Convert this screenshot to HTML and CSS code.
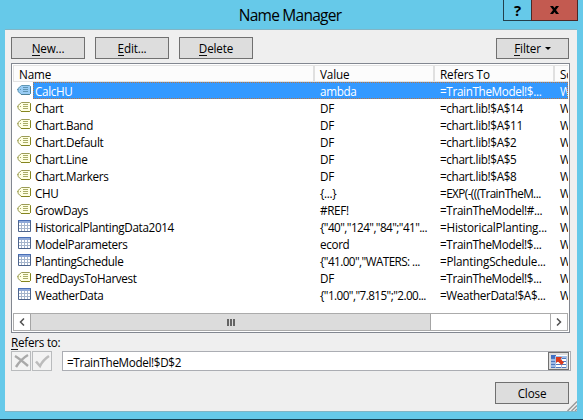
FILE: index.html
```html
<!DOCTYPE html>
<html lang="en">
<head>
<meta charset="utf-8">
<title>Name Manager</title>
<link rel="stylesheet" href="styles.css">
</head>
<body>
<svg class="defs" width="0" height="0">
  <symbol id="tag" viewBox="0 0 14 10">
    <path class="tag-body" d="M4.500.5h8l1 1v7l-1 1h-8L1 6.500V3.500z"/>
    <path class="tag-lines" d="M6 2.500h5M6 4.500h5M6 6.500h5M0 4.500h1.500M3 4.500h1"/>
    <path class="tag-edge" d="M4 9.500h8.500l1-1v-7"/>
  </symbol>
  <symbol id="table" viewBox="0 0 13 12">
    <path fill="#fff" d="M0 0h13v12H0z"/>
    <path fill="#8fa9d8" d="M0 0h13v3H0z"/>
    <path fill="none" stroke="#a5b5cc" d="M3.500 3v8M6.500 3v8M9.500 3v8M1 5.500h11M1 8.500h11"/>
    <path fill="none" stroke="#4d648c" d="M.5.5h12v11H.5z"/>
    <path fill="none" stroke="#4a70b8" d="M0 .5h13"/>
  </symbol>
</svg>
<div class="window">
  <header class="titlebar">
    <h1>Name Manager</h1>
    <div class="caption">
      <button class="help">?</button>
      <button class="exit"><svg width="9" height="8" viewBox="0 0 9 8"><path d="M0 0h3l1.500 2L6 0h3L6 4l3 4H6L4.500 6 3 8H0l3-4z"/></svg></button>
    </div>
  </header>
  <main class="client">
    <div class="toolbar">
      <button class="btn"><span><u>N</u>ew...</span></button>
      <button class="btn"><span><u>E</u>dit...</span></button>
      <button class="btn"><span><u>D</u>elete</span></button>
      <button class="btn filter"><span><u>F</u>ilter</span><i class="caret"></i></button>
    </div>
    <section class="list">
      <div class="head"><span>Name</span><span>Value</span><span>Refers To</span><span>Sc</span></div>
      <div class="rows">
        <div class="row selected"><svg class="tag"><use href="#tag"/></svg><div class="cells"><span>CalcHU</span><span>ambda</span><span>=TrainTheModel!$...</span><span>W</span></div></div>
        <div class="row"><svg class="tag"><use href="#tag"/></svg><div class="cells"><span>Chart</span><span>DF</span><span>=chart.lib!$A$14</span><span>W</span></div></div>
        <div class="row"><svg class="tag"><use href="#tag"/></svg><div class="cells"><span>Chart.Band</span><span>DF</span><span>=chart.lib!$A$11</span><span>W</span></div></div>
        <div class="row"><svg class="tag"><use href="#tag"/></svg><div class="cells"><span>Chart.Default</span><span>DF</span><span>=chart.lib!$A$2</span><span>W</span></div></div>
        <div class="row"><svg class="tag"><use href="#tag"/></svg><div class="cells"><span>Chart.Line</span><span>DF</span><span>=chart.lib!$A$5</span><span>W</span></div></div>
        <div class="row"><svg class="tag"><use href="#tag"/></svg><div class="cells"><span>Chart.Markers</span><span>DF</span><span>=chart.lib!$A$8</span><span>W</span></div></div>
        <div class="row"><svg class="tag"><use href="#tag"/></svg><div class="cells"><span>CHU</span><span>{...}</span><span class="dense">=EXP(-(((TrainTheM...</span><span>W</span></div></div>
        <div class="row"><svg class="tag"><use href="#tag"/></svg><div class="cells"><span>GrowDays</span><span>#REF!</span><span>=TrainTheModel!#...</span><span>W</span></div></div>
        <div class="row"><svg class="table"><use href="#table"/></svg><div class="cells"><span>HistoricalPlantingData2014</span><span class="dense">{"40","124","84";"41"...</span><span class="loose">=HistoricalPlanting...</span><span>W</span></div></div>
        <div class="row"><svg class="table"><use href="#table"/></svg><div class="cells"><span>ModelParameters</span><span>ecord</span><span>=TrainTheModel!$...</span><span>W</span></div></div>
        <div class="row"><svg class="table"><use href="#table"/></svg><div class="cells"><span>PlantingSchedule</span><span class="dense">{"41.00","WATERS: ...</span><span class="loose">=PlantingSchedule...</span><span>W</span></div></div>
        <div class="row"><svg class="tag"><use href="#tag"/></svg><div class="cells"><span>PredDaysToHarvest</span><span>DF</span><span>=TrainTheModel!$...</span><span>W</span></div></div>
        <div class="row"><svg class="table"><use href="#table"/></svg><div class="cells"><span>WeatherData</span><span class="dense">{"1.00","7.815";"2.00...</span><span>=WeatherData!$A$...</span><span>W</span></div></div>
      </div>
      <div class="scroll">
        <div class="arrow"><svg width="6" height="8" viewBox="0 0 6 8"><path d="M5 .5 1.500 4 5 7.500"/></svg></div>
        <div class="thumb"><i></i><i></i><i></i></div>
        <div class="arrow end"><svg width="6" height="8" viewBox="0 0 6 8"><path d="M1 .5 4.500 4 1 7.500"/></svg></div>
      </div>
    </section>
    <label class="label"><u>R</u>efers to:</label>
    <div class="formula">
      <button class="tool"><svg width="17" height="17" viewBox="0 0 17 17"><path fill="none" stroke="#a9a9a9" stroke-width="2.400" d="M2 3q5 3 13 10M15 2Q8 6 3 14"/></svg></button>
      <button class="tool"><svg width="17" height="17" viewBox="0 0 17 17"><path fill="none" stroke="#bcbcbc" stroke-width="2.600" d="M2 8.500 6 13Q9 7 15 3"/></svg></button>
      <div class="field"><span>=TrainTheModel!$D$2</span>
        <button class="pick"><svg width="16" height="13" viewBox="0 0 16 13">
          <path fill="#fff" d="M0 0h16v13H0z"/>
          <path fill="#3f6fc4" d="M0 0h5v3H0z"/>
          <path fill="#9fbce8" d="M5 1h11v2H5zM0 3h5v9H0z"/>
          <path fill="none" stroke="#4f78bd" d="M0 3.500h16M0 6.500h16M0 9.500h16M0 12.500h16"/>
          <path fill="none" stroke="#a9c0e4" d="M4.500 1v12M10.500 1v12M15.500 1v12"/>
          <path fill="#dc3a1c" d="M5 2h6L9.500 4 13 7.500 10.500 10 7 6.500 5 8z"/>
        </svg></button>
      </div>
    </div>
    <div class="footer"><button class="btn"><span>Close</span></button></div>
    <svg class="grip" width="10" height="10" viewBox="0 0 10 10"><path d="M.5 10 10 .5M4.500 10 10 4.500M8 10l2-2"/></svg>
  </main>
</div>
</body>
</html>
```
FILE: styles.css
```css
* { box-sizing: border-box; }
body { margin: 0; font: 11.7px/17px "Open Sans", "Noto Sans", sans-serif; letter-spacing: -0.34px; color: #000; }
button { font: inherit; letter-spacing: inherit; color: inherit; margin: 0; padding: 0; border-radius: 0; }
.defs { position: absolute; }
u { text-decoration: none; display: inline-block; height: 15px; line-height: 15px; border-bottom: 1px solid #111; }
.window { width: 583px; height: 420px; padding: 0 5px 8px; background: #66c9e9; border-bottom: 1px solid #173f50; overflow: hidden; }
.titlebar { position: relative; height: 29px; }
h1 { margin: 0; padding-right: 3px; font-size: 15.5px; font-weight: 400; line-height: 30px; letter-spacing: -0.75px; text-align: center; }
.caption { position: absolute; right: 0; top: 0; display: flex; height: 21px; }
.caption button { display: flex; align-items: center; justify-content: center; border: 1px solid #23404c; border-top: 0; background: #66c9e9; font-weight: 700; font-size: 15px; }
.caption .help { width: 28px; border-right: 0; }
.caption .exit { width: 47px; background: #c35a50; border-color: #4b2827; }
.client { position: relative; width: 572px; height: 383px; padding: 7px 6px 0; border: solid #82b5c5; border-width: 1px 0; background: #efefef; }
.toolbar { display: flex; gap: 10px; }
.btn { display: flex; align-items: center; justify-content: center; width: 74px; height: 22px; border: 1px solid #707070; background: #ddd; letter-spacing: -0.15px; }
.toolbar .filter { margin: 1px 2px 0 auto; width: 73px; height: 21px; gap: 4px; }
.caret { border: solid transparent; border-width: 3px 3px 0; border-top-color: #000; }
.list { width: 559px; height: 270px; margin-top: 4px; padding: 1px; border: 1px solid #828790; background: #fff; display: flex; flex-direction: column; }
.head { display: grid; grid-template-columns: 299px 120px 120px 1fr; height: 17px; border: 1px solid #e3e3e3; border-right: 0; background: #fcfcfc; overflow: hidden; line-height: 17px; letter-spacing: -0.15px; }
.head span { padding-left: 5px; white-space: nowrap; overflow: hidden; }
.head span + span { border-left: 2px solid #e0e0e0; }
.rows { height: 231px; overflow: hidden; line-height: 18px; }
.row { display: flex; height: 17px; padding-left: 4px; }
.row svg { flex: none; width: 14px; height: 10px; margin-top: 3px; }
.row svg.table { width: 13px; height: 12px; margin: 2px 0 0 1px; }
.cells { flex: 1; display: grid; grid-template-columns: 285px 120px 120px 1fr; margin-left: 2px; padding-left: 2px; white-space: nowrap; overflow: hidden; }
.dense { letter-spacing: -0.55px; }
.loose { letter-spacing: -0.2px; }
.selected .cells { background: #3399ff; color: #fff; outline: 1px dotted #b77442; outline-offset: -1px; }
.tag { --tag-fill: #ffffe3; --tag-stroke: #9b9b55; --tag-line: #a9ad67; --tag-shade: #85851e; }
.selected .tag { --tag-fill: #99ccf4; --tag-stroke: #5f97b5; --tag-line: #5f96b4; --tag-shade: #4d8299; }
.tag-body { fill: var(--tag-fill); stroke: var(--tag-stroke); }
.tag-lines { fill: none; stroke: var(--tag-line); }
.tag-edge { fill: none; stroke: var(--tag-shade); }
.scroll { display: flex; height: 18px; border: 1px solid #ababab; }
.arrow { width: 16px; display: flex; align-items: center; justify-content: center; }
.arrow path { fill: none; stroke: #505050; stroke-width: 1.500; }
.arrow.end { width: 17px; margin-left: auto; border-left: 1px solid #ababab; }
.thumb { width: 401px; display: flex; align-items: center; justify-content: center; gap: 1px; border: solid #a4a4a4; border-width: 0 1px; background: #dcdcdc; }
.thumb i { width: 2px; height: 7px; background: #646464; }
.label { display: block; height: 17px; margin-top: 1px; letter-spacing: -0.25px; }
.formula { display: flex; align-items: flex-start; }
.tool { width: 20px; height: 20px; margin: 0 1px 0 0; display: grid; place-items: center; background: #f3f3f3; border: 1px solid #b9bbbd; }
.field { width: 509px; height: 20px; margin-left: 9px; padding: 0 1px 0 4px; display: flex; justify-content: space-between; border: 1px solid #abadb3; background: #fff; line-height: 20px; }
.pick { width: 21px; height: 18px; display: grid; place-items: center; border: 1px solid #707070; background: #ddd; }
.footer { display: flex; justify-content: flex-end; margin: 11px 2px 0 0; }
.grip { position: absolute; right: 0; bottom: 0; fill: none; stroke: #999; stroke-width: 1.400; }
```
